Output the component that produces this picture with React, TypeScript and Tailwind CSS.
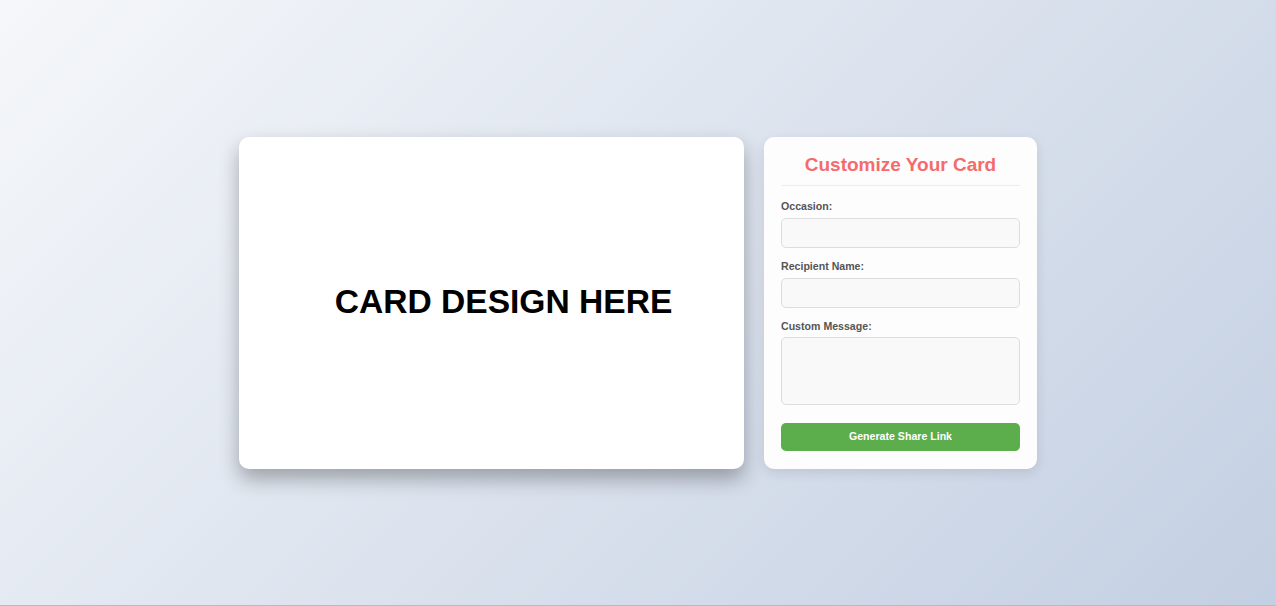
import React from 'react';

export default function App() {
  return (
    <div className="h-[606px] border-b border-[#b3bac9] bg-[linear-gradient(135deg,#f5f7fa_0%,#c3cfe2_100%)] flex items-center justify-center gap-5 font-['Liberation_Sans',Arial,sans-serif]">
      {/* Card preview */}
      <div className="w-[505px] h-[332px] bg-white rounded-[10px] shadow-[0_10px_20px_rgba(0,0,0,0.3)] flex items-center justify-center pl-6">
        <h1 className="text-[33.6px] font-bold text-black">CARD DESIGN HERE</h1>
      </div>

      {/* Customization panel */}
      <div className="w-[273px] h-[332px] bg-[#fdfdfe] rounded-[10px] shadow-[0_4px_12px_rgba(0,0,0,0.1)] p-[17px] flex flex-col">
        <h2 className="text-[19px] leading-[21px] font-bold text-[#f56b6b] text-center pb-[10px] border-b border-[#eee]">
          Customize Your Card
        </h2>

        <label className="mt-[14px] text-[10.6px] leading-[13px] font-bold text-[#555]">Occasion:</label>
        <input className="mt-[5px] h-[30px] bg-[#f9f9f9] border border-[#ddd] rounded-[5px] outline-none" />

        <label className="mt-[12px] text-[10.6px] leading-[13px] font-bold text-[#555]">Recipient Name:</label>
        <input className="mt-[5px] h-[30px] bg-[#f9f9f9] border border-[#ddd] rounded-[5px] outline-none" />

        <label className="mt-[12px] text-[10.6px] leading-[13px] font-bold text-[#555]">Custom Message:</label>
        <textarea className="mt-[4px] h-[68px] bg-[#f9f9f9] border border-[#ddd] rounded-[5px] outline-none resize-none" />

        <button className="mt-[18px] h-[28px] bg-[#5cad4c] rounded-[5px] text-white text-[10.6px] font-bold">
          Generate Share Link
        </button>
      </div>
    </div>
  );
}
